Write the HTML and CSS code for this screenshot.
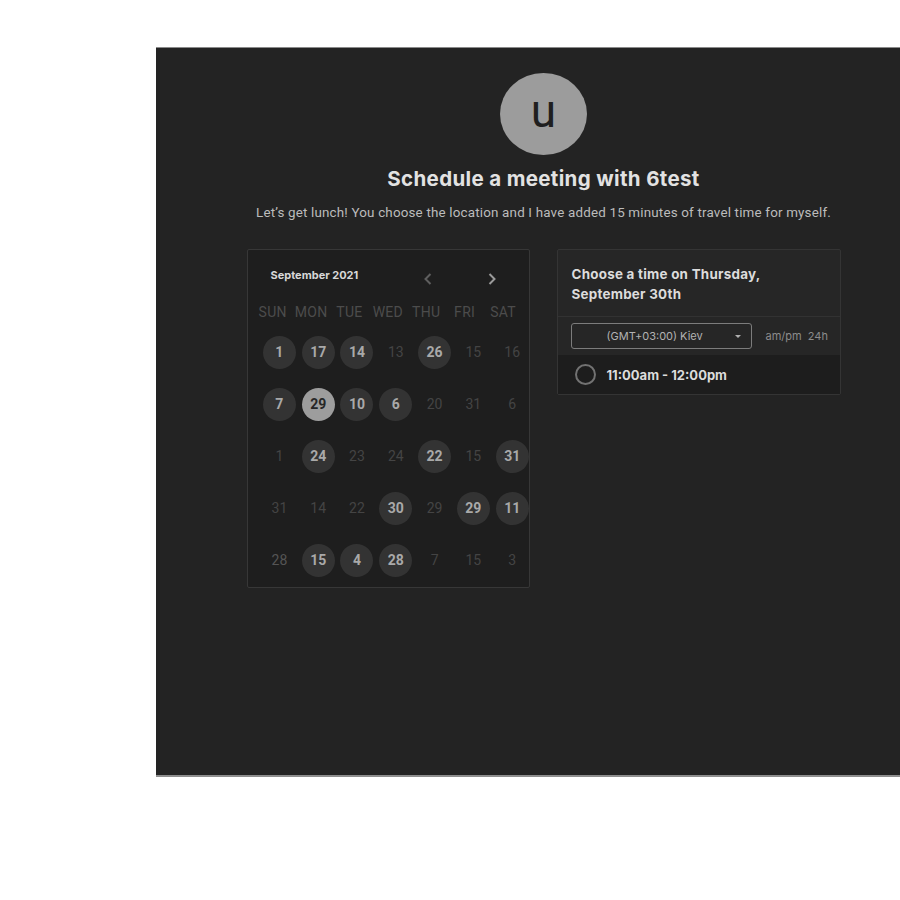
FILE: index.html
```html
<!DOCTYPE html>
<html>
<head>
<meta charset="utf-8">
<link rel="stylesheet" href="styles.css">
</head>
<body>
<div class="panel">
  <div class="avatar">u</div>
  <h1 class="title">Schedule a meeting with 6test</h1>
  <p class="subtitle">Let’s get lunch! You choose the location and I have added 15 minutes of travel time for myself.</p>
  <div class="cards">
    <div class="calendar">
      <div class="cal-head">
        <div class="month">September 2021</div>
        <div class="nav">
          <span class="nav-btn dim"><svg width="10" height="14" viewBox="0 0 10 14"><path d="M7.5 2 L2.5 7 L7.5 12" fill="none" stroke="currentColor" stroke-width="2"/></svg></span>
          <span class="nav-btn"><svg width="10" height="14" viewBox="0 0 10 14"><path d="M2.5 2 L7.5 7 L2.5 12" fill="none" stroke="currentColor" stroke-width="2"/></svg></span>
        </div>
      </div>
      <div class="weekdays">
        <span>SUN</span><span>MON</span><span>TUE</span><span>WED</span><span>THU</span><span>FRI</span><span>SAT</span>
      </div>
      <div class="dates">
        <span class="d a">1</span><span class="d a">17</span><span class="d a">14</span><span class="d">13</span><span class="d a">26</span><span class="d">15</span><span class="d">16</span>
        <span class="d a">7</span><span class="d sel">29</span><span class="d a">10</span><span class="d a">6</span><span class="d">20</span><span class="d">31</span><span class="d">6</span>
        <span class="d">1</span><span class="d a">24</span><span class="d">23</span><span class="d">24</span><span class="d a">22</span><span class="d">15</span><span class="d a">31</span>
        <span class="d">31</span><span class="d">14</span><span class="d">22</span><span class="d a">30</span><span class="d">29</span><span class="d a">29</span><span class="d a">11</span>
        <span class="d mid">28</span><span class="d a">15</span><span class="d a">4</span><span class="d a">28</span><span class="d">7</span><span class="d">15</span><span class="d">3</span>
      </div>
    </div>
    <div class="times">
      <div class="times-head">Choose a time on Thursday,<br>September 30th</div>
      <div class="toolbar">
        <div class="select"><span>(GMT+03:00) Kiev</span><span class="caret"></span></div>
        <div class="fmt">am/pm&nbsp;&nbsp;24h</div>
      </div>
      <div class="slot">
        <span class="radio"></span>
        <span class="slot-text">11:00am - 12:00pm</span>
      </div>
    </div>
  </div>
</div>
</body>
</html>
```
FILE: styles.css
```css
html, body {
  margin: 0;
  padding: 0;
  background: #ffffff;
  overflow: hidden;
}
body {
  font-family: Roboto, "Liberation Sans", sans-serif;
}
.panel {
  margin: 47px 0 0 156px;
  width: 775px;
  height: 727px;
  background: #232323;
  border-top: 1px solid #8a8a8a;
  border-bottom: 2px solid #8e8e8e;
  display: flex;
  flex-direction: column;
  align-items: center;
  box-sizing: content-box;
}
.avatar {
  margin-top: 25px;
  width: 87px;
  height: 82px;
  border-radius: 50%;
  background: #9c9c9c;
  color: #1f1f1f;
  font-family: Roboto, sans-serif;
  font-size: 46px;
  line-height: 76px;
  text-align: center;
}
.title {
  margin: 12px 0 0;
  font-family: Inter, "Liberation Sans", sans-serif;
  font-weight: 700;
  font-size: 20.5px;
  line-height: 24px;
  color: #e2e2e2;
  letter-spacing: 0.35px;
}
.subtitle {
  margin: 13px 0 0;
  font-size: 13.4px;
  line-height: 18px;
  color: #bcbcbc;
  letter-spacing: 0.18px;
}
.cards {
  margin-top: 27px;
  display: flex;
  gap: 27px;
  align-items: flex-start;
}
.calendar {
  width: 283px;
  height: 339px;
  box-sizing: border-box;
  background: #1e1e1e;
  border: 1px solid #373737;
  border-radius: 2px;
}
.cal-head {
  height: 52px;
  display: flex;
  justify-content: space-between;
  align-items: flex-start;
  padding: 0 25px 0 23px;
}
.month {
  margin-top: 18px;
  font-family: Inter, "Liberation Sans", sans-serif;
  font-weight: 700;
  font-size: 11px;
  line-height: 14px;
  color: #d8d8d8;
}
.nav {
  margin-top: 22px;
  display: flex;
  gap: 40px;
}
.nav-btn {
  width: 24px;
  height: 14px;
  display: flex;
  justify-content: center;
  color: #9a9a9a;
}
.nav-btn.dim {
  color: #5e5e5e;
}
.weekdays {
  display: grid;
  grid-template-columns: repeat(7, 38.4px);
  padding-left: 6px;
  height: 20px;
  line-height: 20px;
  font-size: 14px;
  color: #4c4c4c;
  text-align: center;
  letter-spacing: 0.3px;
}
.dates {
  margin: 4px 0 0 12.5px;
  display: grid;
  grid-template-columns: repeat(7, 38.8px);
  grid-auto-rows: 52px;
  justify-items: center;
  align-items: center;
}
.d {
  width: 33px;
  height: 33px;
  border-radius: 50%;
  display: flex;
  align-items: center;
  justify-content: center;
  font-size: 14px;
  color: #444444;
}
.d.mid {
  color: #555555;
}
.d.a {
  background: #333333;
  color: #a9a9a9;
  font-weight: 700;
}
.d.sel {
  background: #9d9d9d;
  color: #262626;
  font-weight: 700;
}
.times {
  width: 284px;
  box-sizing: border-box;
  border: 1px solid #343434;
  border-radius: 2px;
  background: #262626;
  font-family: Inter, "Liberation Sans", sans-serif;
}
.times-head {
  padding: 14px 14px 12px;
  font-weight: 700;
  font-size: 13.4px;
  line-height: 20px;
  color: #dcdcdc;
  letter-spacing: 0.25px;
  border-bottom: 1px solid #323232;
}
.toolbar {
  display: flex;
  align-items: center;
  padding: 6px 0 6px 13px;
  gap: 14px;
}
.select {
  width: 181px;
  height: 26px;
  box-sizing: border-box;
  border: 1px solid #7c7c7c;
  border-radius: 3px;
  display: flex;
  align-items: center;
  padding: 0 10px 0 35px;
  font-size: 11px;
  color: #b2b2b2;
}
.select span:first-child {
  flex: 1;
}
.caret {
  width: 0;
  height: 0;
  border-left: 3px solid transparent;
  border-right: 3px solid transparent;
  border-top: 3px solid #b0b0b0;
}
.fmt {
  font-size: 11px;
  color: #8c8c8c;
}
.slot {
  height: 39px;
  background: #1d1d1d;
  display: flex;
  align-items: center;
  padding-left: 17px;
  gap: 11px;
}
.radio {
  width: 21px;
  height: 21px;
  box-sizing: border-box;
  border: 2px solid #727272;
  border-radius: 50%;
}
.slot-text {
  font-weight: 700;
  font-size: 13px;
  color: #dcdcdc;
}
```
